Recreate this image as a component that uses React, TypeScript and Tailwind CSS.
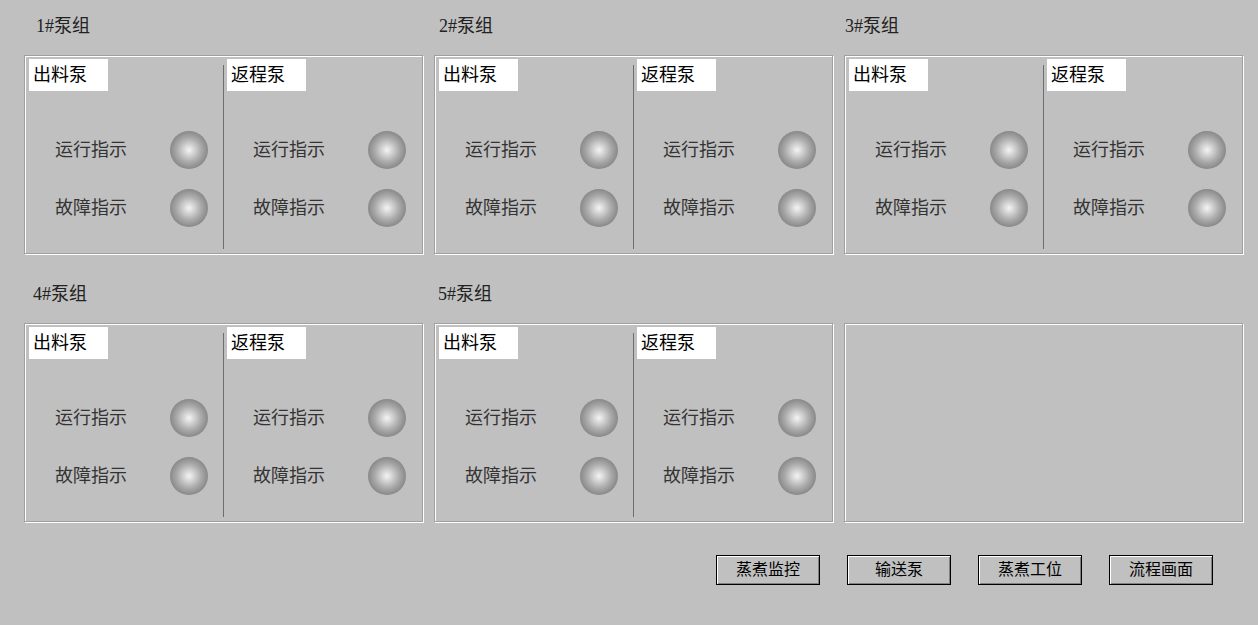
const GROUPS = [
  { title: '1#泵组', pad: 'pl-[12px]' },
  { title: '2#泵组', pad: 'pl-[5px]' },
  { title: '3#泵组', pad: 'pl-[1px]' },
  { title: '4#泵组', pad: 'pl-[9px]' },
  { title: '5#泵组', pad: 'pl-[4px]' },
];
const BUTTONS = ['蒸煮监控', '输送泵', '蒸煮工位', '流程画面'];

const FONT = "font-['Liberation_Serif','Noto_Sans_CJK_SC',serif]";

function Lamp() {
  return (
    <div className="w-[38px] h-[38px] rounded-full bg-[radial-gradient(circle,#f4f4f4_0%,#acacac_44%,#7c7c7c_80%,#5c5c5c_100%)]" />
  );
}

function Half({ title, right }: { title: string; right?: boolean }) {
  return (
    <div className={`flex flex-col w-[199px] pt-[3px] ${right ? 'pl-[3px]' : 'pl-[4px]'}`}>
      <div className="w-[79px] h-[32px] bg-white pl-[4px] text-[18px] leading-[32px] text-black">{title}</div>
      <div className="mt-[40px] flex flex-col gap-[20px]">
        {['运行指示', '故障指示'].map(t => (
          <div key={t} className="flex items-center h-[38px]">
            <span className="ml-[26px] w-[115px] text-[18px] text-[#333]">{t}</span>
            <Lamp />
          </div>
        ))}
      </div>
    </div>
  );
}

function Panel({ title, pad }: { title?: string; pad?: string }) {
  return (
    <div className="flex flex-col">
      <div className={`h-[55px] pt-[17px] text-[18px] leading-[18px] text-[#222] ${pad ?? ''}`}>{title}</div>
      <div className="w-[399px] h-[199px] border border-[#a0a0a0] shadow-[inset_1px_1px_0_#fff,1px_1px_0_#fff] flex">
        {title && (
          <>
            <Half title="出料泵" />
            <div className="mt-[9px] h-[184px] w-px bg-[#6e6e6e]" />
            <Half title="返程泵" right />
          </>
        )}
      </div>
    </div>
  );
}

export default function App() {
  return (
    <div className={`w-[1258px] h-[625px] bg-[#c0c0c0] overflow-hidden ${FONT}`}>
      <div className="pl-[24px] grid grid-cols-[399px_399px_399px] gap-x-[11px] gap-y-[14px]">
        {GROUPS.map(g => (
          <Panel key={g.title} title={g.title} pad={g.pad} />
        ))}
        <Panel />
      </div>
      <div className="mt-[33px] flex justify-end pr-[45px] gap-[27px]">
        {BUTTONS.map(b => (
          <button
            key={b}
            className="w-[104px] h-[30px] border border-black bg-[#c0c0c0] shadow-[inset_1px_1px_0_#fff,inset_-1px_-1px_0_#808080] text-[16px] text-black leading-none"
          >
            {b}
          </button>
        ))}
      </div>
    </div>
  );
}
